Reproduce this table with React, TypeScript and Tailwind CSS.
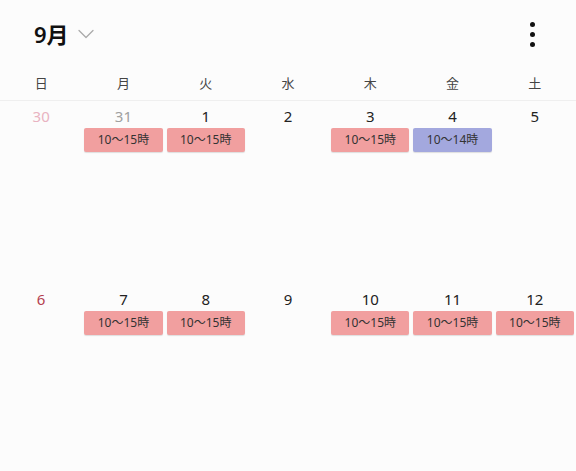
import { ChevronDown } from 'lucide-react'

type Day = {
  label: string
  tone?: 'prevSun' | 'prev' | 'sun' | 'normal'
  event?: { text: string; color: 'red' | 'blue' }
}

const weekdays = ['日', '月', '火', '水', '木', '金', '土']

const weeks: Day[][] = [
  [
    { label: '30', tone: 'prevSun' },
    { label: '31', tone: 'prev', event: { text: '10〜15時', color: 'red' } },
    { label: '1', event: { text: '10〜15時', color: 'red' } },
    { label: '2' },
    { label: '3', event: { text: '10〜15時', color: 'red' } },
    { label: '4', event: { text: '10〜14時', color: 'blue' } },
    { label: '5' },
  ],
  [
    { label: '6', tone: 'sun' },
    { label: '7', event: { text: '10〜15時', color: 'red' } },
    { label: '8', event: { text: '10〜15時', color: 'red' } },
    { label: '9' },
    { label: '10', event: { text: '10〜15時', color: 'red' } },
    { label: '11', event: { text: '10〜15時', color: 'red' } },
    { label: '12', event: { text: '10〜15時', color: 'red' } },
  ],
]

const toneClass = {
  prevSun: 'text-[#e9b3c1]',
  prev: 'text-[#a0a0a0]',
  sun: 'text-[#b4404f]',
  normal: 'text-[#222]',
}

function DayCell({ day }: { day: Day }) {
  return (
    <div className="flex flex-col items-center px-[2px] pt-[5px]">
      <span className={`text-[15px] leading-[21px] ${toneClass[day.tone ?? 'normal']}`}>
        {day.label}
      </span>
      {day.event && (
        <div
          className={`mt-[1px] flex h-[24px] w-full items-center justify-center rounded-[2px] text-[12px] text-[#333] shadow-[0_1px_1px_rgba(0,0,0,0.12)] ${
            day.event.color === 'red' ? 'bg-[#f19f9f]' : 'bg-[#a3a8de]'
          }`}
        >
          {day.event.text}
        </div>
      )}
    </div>
  )
}

export default function App() {
  return (
    <div
      className="h-[471px] w-[576px] overflow-hidden bg-[#fcfcfc]"
      style={{ fontFamily: '"Noto Sans", "Noto Sans CJK JP", sans-serif' }}
    >
      <div className="flex h-[68px] items-center justify-between pl-[34px] pr-[41px]">
        <div className="flex items-center gap-[3px]">
          <span className="text-[22px] font-semibold text-[#111]">9月</span>
          <ChevronDown className="h-[28px] w-[28px] text-[#aaa]" strokeWidth={1.1} />
        </div>
        <div className="flex flex-col items-center gap-[5px]">
          <span className="h-[5px] w-[5px] rounded-full bg-[#111]" />
          <span className="h-[5px] w-[5px] rounded-full bg-[#111]" />
          <span className="h-[5px] w-[5px] rounded-full bg-[#111]" />
        </div>
      </div>

      <div className="grid h-[33px] grid-cols-7 border-b border-[#efefef]">
        {weekdays.map((w) => (
          <div key={w} className="flex items-center justify-center text-[13px] text-[#444]">
            {w}
          </div>
        ))}
      </div>

      {weeks.map((week, i) => (
        <div key={i} className="grid h-[183px] grid-cols-7">
          {week.map((day) => (
            <DayCell key={day.label} day={day} />
          ))}
        </div>
      ))}
    </div>
  )
}
